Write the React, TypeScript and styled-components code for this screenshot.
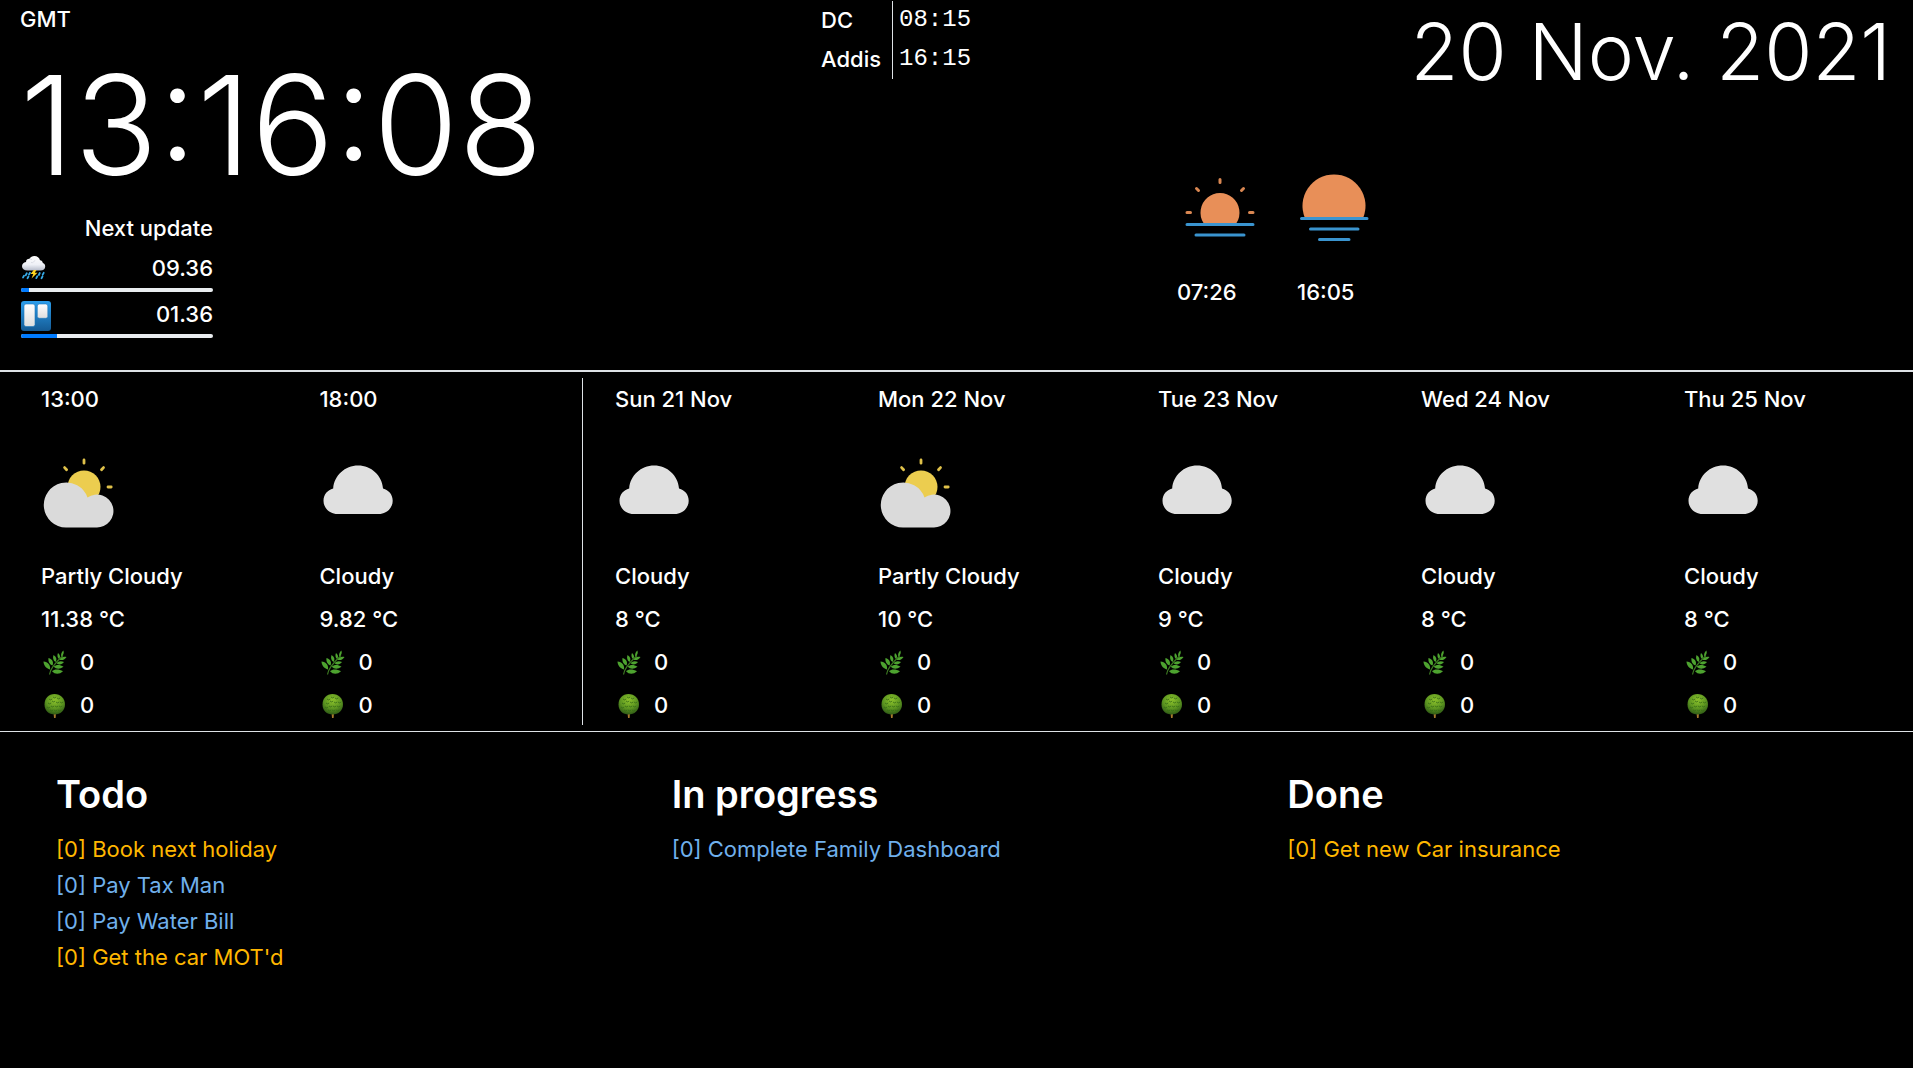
import React from "react";
import styled, { createGlobalStyle } from "styled-components";

const GlobalStyle = createGlobalStyle`
  * { box-sizing: border-box; }
  html { background: #000; }
  body {
    margin: 0;
    background: #000;
    color: #fff;
    font-family: Inter, "Liberation Sans", sans-serif;
    font-size: 22px;
    font-weight: 500;
    line-height: 36px;
  }
  svg { display: block; flex: none; }
`;

const Header = styled.header`
  display: grid;
  grid-template-columns: 821fr 351fr 741fr;
  align-items: start;
  height: 370px;
`;

const ClockColumn = styled.section`
  padding: 1px 0 0 20px;
`;

const Clock = styled.time`
  display: block;
  padding-top: 16px;
  font-size: 138px;
  font-weight: 350;
  line-height: 144px;
  white-space: nowrap;
`;

const Updates = styled.section`
  display: flex;
  flex-direction: column;
  width: 193px;
  margin-top: 13px;
  padding-left: 1px;
`;

const UpdatesTitle = styled.div`
  text-align: right;
  line-height: 36px;
`;

const UpdateRow = styled.div`
  display: flex;
  justify-content: space-between;
  align-items: flex-end;
  height: 42px;
  line-height: 40px;

  svg { margin-bottom: 3px; }
  svg.storm { margin-bottom: 8px; }
`;

const Track = styled.div`
  height: 4px;
  border-radius: 2px;
  background: #e9ecef;
  overflow: hidden;
`;

const Fill = styled.div<{ $percent: number }>`
  width: ${(p) => p.$percent}%;
  height: 100%;
  background: #007bff;
`;

const Zones = styled.table`
  justify-self: start;
  border-collapse: collapse;
  margin-top: 1px;

  th {
    padding: 0 11px 0 0;
    border-right: 1px solid #dee2e6;
    font-weight: 500;
    text-align: left;
    line-height: 39px;
  }

  td {
    padding: 0 0 2px 6px;
    font-family: "Liberation Mono", monospace;
    font-size: 24px;
    font-weight: 400;
    line-height: 37px;
  }
`;

const DateColumn = styled.section`
  display: flex;
  flex-direction: column;
`;

const Today = styled.time`
  padding: 2px 22px 0 0;
  font-size: 78px;
  font-weight: 350;
  line-height: 100px;
  text-align: right;
  white-space: nowrap;
`;

const SunTimes = styled.div`
  display: flex;
  gap: 18px;
  margin-top: 62px;
`;

const SunTime = styled.div`
  display: flex;
  flex-direction: column;
  gap: 14px;
  width: 102px;

  span { padding-left: 5px; }
`;

const Forecast = styled.main`
  display: grid;
  grid-template-columns: 583fr 1330fr;
  padding: 6px 0;
  border-top: 2px solid #dee2e6;
  border-bottom: 1px solid #dee2e6;
`;

const Hours = styled.section`
  display: grid;
  grid-template-columns: 279fr 263fr;
  padding-left: 41px;
  border-right: 1px solid #dee2e6;
`;

const Days = styled.section`
  display: grid;
  grid-template-columns: 263fr 280fr 263fr 263fr 229fr;
  padding-left: 32px;
`;

const Slot = styled.article`
  display: flex;
  flex-direction: column;
  height: 347px;
  line-height: 43px;

  svg.weather { margin: 24px 0 14px; }
`;

const Pollen = styled.div`
  display: flex;
  align-items: center;
  gap: 11px;
  height: 43px;
`;

const Board = styled.section`
  display: grid;
  grid-template-columns: repeat(3, 1fr);
  padding: 36px 33px 0;
`;

const List = styled.section`
  padding-left: 23px;
`;

const ListTitle = styled.h1`
  margin: 0 0 11px;
  font-size: 38px;
  font-weight: 600;
  line-height: 52px;
`;

const Cards = styled.ul`
  margin: 0;
  padding: 0;
  list-style: none;
`;

const Card = styled.li<{ $tone: Tone }>`
  color: ${(p) => (p.$tone === "amber" ? "#ffb700" : "#70b0ec")};
  font-weight: 400;
`;

type Tone = "amber" | "blue";
type Sky = "Partly Cloudy" | "Cloudy";

const StormIcon = () => (
  <svg className="storm" width="26" height="26" viewBox="0 0 26 26" aria-hidden="true">
    <defs>
      <linearGradient id="storm" x1="0" y1="0" x2="0" y2="1">
        <stop offset="0" stopColor="#fff" />
        <stop offset=".6" stopColor="#eef0f6" />
        <stop offset="1" stopColor="#b6bccb" />
      </linearGradient>
    </defs>
    <path d="M6.500 16.500C3 16.500 1 14.700 1 12.200C1 10 2.500 8.500 5 8C5 5.800 6.700 4.700 8.600 4.800C9.500 3 11.300 2 13.300 2C16.300 2 18.500 3.800 19 6.300C20.800 6.600 21.700 7.600 21.800 9C23.400 9.500 24.200 10.800 24.200 12.500C24.200 15 22.300 16.500 19.500 16.500Z" fill="url(#storm)" />
    <path d="M10 8.500C12 9.200 13.300 7.500 14 6.200M8.600 4.800C9.800 4.800 10.600 5.300 11 6" stroke="#d4d7e0" fill="none" strokeWidth=".8" />
    <path d="M12.800 16L9.500 20H12.300L10.500 24.500L16.500 18.800H13.800L15.500 16Z" fill="#ffd51f" />
    <path d="M5.800 19.300L4.700 21.300M9 18.800L8 20.500M3 21.800L2 23.500M7.500 22.500L6.500 24.200M18.800 19L17.800 21M22.700 18.800L21.700 20.700M16.300 22.300L15.300 24.100M21.500 22.500L20.500 24.200" stroke="#36a9e6" strokeWidth="1.800" strokeLinecap="round" />
  </svg>
);

const TrelloIcon = () => (
  <svg width="30" height="30" viewBox="0 0 30 30" aria-hidden="true">
    <defs>
      <linearGradient id="board" x1="0" y1="0" x2="0" y2="1">
        <stop offset="0" stopColor="#2c9eec" />
        <stop offset="1" stopColor="#145a94" />
      </linearGradient>
      <linearGradient id="card" x1="0" y1="0" x2="0" y2="1">
        <stop offset="0" stopColor="#fff" />
        <stop offset="1" stopColor="#dedede" />
      </linearGradient>
    </defs>
    <rect width="30" height="30" rx="3" fill="url(#board)" />
    <rect x="3" y="3" width="11" height="22.500" rx="2" fill="url(#card)" stroke="#1b75bb" strokeWidth=".6" />
    <rect x="16.300" y="3" width="10.500" height="14.300" rx="2" fill="url(#card)" stroke="#1b75bb" strokeWidth=".6" />
  </svg>
);

const SunriseIcon = () => (
  <svg width="96" height="96" viewBox="0 0 96 96" aria-hidden="true">
    <path d="M31.500 59A19.500 19.500 0 1 1 64.500 59Z" fill="#e88f58" />
    <path d="M48 15.500V18.500M24.500 24.500L26.500 26.500M71.500 24.500L69.500 26.500M15 48.500H18.500M77.500 48.500H81" stroke="#d98752" strokeWidth="3" strokeLinecap="round" />
    <path d="M15 60.500H81M24 71H72" stroke="#3a94cf" strokeWidth="3" strokeLinecap="round" />
  </svg>
);

const SunsetIcon = () => (
  <svg width="96" height="96" viewBox="0 0 96 96" aria-hidden="true">
    <path d="M12.700 53.500A31.500 31.500 0 1 1 71.300 53.500Z" fill="#e88f58" />
    <path d="M9.500 54.500H75M18.500 65H66M27.500 75.500H57" stroke="#3a94cf" strokeWidth="3" strokeLinecap="round" />
  </svg>
);

const SkyIcon = ({ sky }: { sky: Sky }) => (
  <svg className="weather" width="96" height="96" viewBox="0 0 96 96" aria-hidden="true">
    {sky === "Partly Cloudy" ? (
      <>
        <circle cx="43" cy="42" r="16.500" fill="#eccd4f" />
        <path d="M43 15V18.200M23.600 22.600L25.600 24.800M62.500 22.600L60.500 24.800M67 42H70.200" stroke="#dfc14a" strokeWidth="2.800" strokeLinecap="round" />
        <path d="M25 82.500A22.500 22.500 0 1 1 46.500 52.500A16.500 16.500 0 1 1 55 82.500Z" fill="#dadada" />
      </>
    ) : (
      <path d="M18.500 69C10.500 69 4.500 63 4.500 55.700C4.500 49.500 8.500 45 14.200 43.500C15 30.500 26 20.500 39.100 20.500C52.200 20.500 63.200 30.500 64 43.500C69.700 45 73.700 49.500 73.700 55.700C73.700 63 67.700 69 59.700 69Z" fill="#e0e0e0" />
    )}
  </svg>
);

const FernIcon = () => (
  <svg width="28" height="28" viewBox="0 0 28 28" aria-hidden="true">
    <path d="M8.500 25.500C9 20 14 14 22 6.500" stroke="#3d7a22" strokeWidth="1.200" fill="none" />
    <g fill="#4da32f">
      <path d="M9 20.500C5 19.500 2.500 16 2.500 12.500C7 13 9.700 16 9 20.500Z" />
      <path d="M11.500 16.500C8.500 15.500 7 12.500 7.500 9C11.500 10.500 12.800 13 11.500 16.500Z" />
      <path d="M14.500 13C12.200 11.500 11.500 9 12.500 6C15.500 8 16.200 10.500 14.500 13Z" />
      <path d="M18 10C16.300 8.500 16 6.300 17 4C19.300 5.800 19.700 8 18 10Z" />
      <path d="M20.300 7.500C19.600 5.500 20.400 3.200 22.500 1.500C23.200 4.200 22.400 6.300 20.300 7.500Z" />
      <path d="M18.500 10.800C20 8.200 22.500 7.200 25.500 8C24 10.500 21.500 11.700 18.500 10.800Z" />
      <path d="M15.500 14.200C17.200 12 20 11.500 23 13C21 15.700 18 16.300 15.500 14.200Z" />
      <path d="M12.700 17.800C15 15.500 19 15.500 22.500 17.700C19 20.200 15.500 20.400 12.700 17.800Z" />
      <path d="M11 22.300C13.500 19.700 18 20 22 22.300C18.500 25.600 14 25.700 11 22.300Z" />
    </g>
  </svg>
);

const LEAVES = [
  [8, 7], [12, 5], [16, 6], [7, 11], [11, 9], [15, 10], [19, 10],
  [6, 15], [10, 14], [14, 14], [18, 14], [9, 18], [13, 18], [17, 18],
];

const TreeIcon = () => (
  <svg width="28" height="28" viewBox="0 0 28 28" aria-hidden="true">
    <defs>
      <radialGradient id="crown" cx=".5" cy=".3" r=".7">
        <stop offset="0" stopColor="#8dc32c" />
        <stop offset=".6" stopColor="#5b9420" />
        <stop offset="1" stopColor="#2f5a16" />
      </radialGradient>
    </defs>
    <path d="M12.500 20H15L14.600 26H13Z" fill="#a77a2d" />
    <path d="M13.500 2C19.500 2 24 6.500 24 12.500C24 18.500 19.500 22.500 13.700 22.500C7.500 22.500 3.500 18.500 3.500 12.500C3.500 6.500 7.500 2 13.500 2Z" fill="url(#crown)" />
    {LEAVES.map(([x, y]) => (
      <path key={`${x}-${y}`} d={`M${x} ${y}q1.500 1.800 3.200 0`} stroke="#346817" strokeWidth=".8" fill="none" />
    ))}
  </svg>
);

const HOURS: { when: string; sky: Sky; temp: string }[] = [
  { when: "13:00", sky: "Partly Cloudy", temp: "11.38" },
  { when: "18:00", sky: "Cloudy", temp: "9.82" },
];

const DAYS: { when: string; sky: Sky; temp: string }[] = [
  { when: "Sun 21 Nov", sky: "Cloudy", temp: "8" },
  { when: "Mon 22 Nov", sky: "Partly Cloudy", temp: "10" },
  { when: "Tue 23 Nov", sky: "Cloudy", temp: "9" },
  { when: "Wed 24 Nov", sky: "Cloudy", temp: "8" },
  { when: "Thu 25 Nov", sky: "Cloudy", temp: "8" },
];

const LISTS: { title: string; cards: { text: string; tone: Tone }[] }[] = [
  {
    title: "Todo",
    cards: [
      { text: "Book next holiday", tone: "amber" },
      { text: "Pay Tax Man", tone: "blue" },
      { text: "Pay Water Bill", tone: "blue" },
      { text: "Get the car MOT'd", tone: "amber" },
    ],
  },
  { title: "In progress", cards: [{ text: "Complete Family Dashboard", tone: "blue" }] },
  { title: "Done", cards: [{ text: "Get new Car insurance", tone: "amber" }] },
];

const ForecastSlot = ({ when, sky, temp }: { when: string; sky: Sky; temp: string }) => (
  <Slot>
    <span>{when}</span>
    <SkyIcon sky={sky} />
    <span>{sky}</span>
    <span>{temp} °C</span>
    <Pollen>
      <FernIcon />
      <span>0</span>
    </Pollen>
    <Pollen>
      <TreeIcon />
      <span>0</span>
    </Pollen>
  </Slot>
);

const Update = ({ icon, time, percent }: { icon: React.ReactNode; time: string; percent: number }) => (
  <>
    <UpdateRow>
      {icon}
      <span>{time}</span>
    </UpdateRow>
    <Track>
      <Fill $percent={percent} />
    </Track>
  </>
);

export default function App() {
  return (
    <>
      <GlobalStyle />
      <Header>
        <ClockColumn>
          <div>GMT</div>
          <Clock>13:16:08</Clock>
          <Updates>
            <UpdatesTitle>Next update</UpdatesTitle>
            <Update icon={<StormIcon />} time="09.36" percent={4} />
            <Update icon={<TrelloIcon />} time="01.36" percent={19} />
          </Updates>
        </ClockColumn>
        <Zones>
          <tbody>
            <tr>
              <th scope="row">DC</th>
              <td>08:15</td>
            </tr>
            <tr>
              <th scope="row">Addis</th>
              <td>16:15</td>
            </tr>
          </tbody>
        </Zones>
        <DateColumn>
          <Today>20 Nov. 2021</Today>
          <SunTimes>
            <SunTime>
              <SunriseIcon />
              <span>07:26</span>
            </SunTime>
            <SunTime>
              <SunsetIcon />
              <span>16:05</span>
            </SunTime>
          </SunTimes>
        </DateColumn>
      </Header>
      <Forecast>
        <Hours>
          {HOURS.map((slot) => (
            <ForecastSlot key={slot.when} {...slot} />
          ))}
        </Hours>
        <Days>
          {DAYS.map((slot) => (
            <ForecastSlot key={slot.when} {...slot} />
          ))}
        </Days>
      </Forecast>
      <Board>
        {LISTS.map((list) => (
          <List key={list.title}>
            <ListTitle>{list.title}</ListTitle>
            <Cards>
              {list.cards.map((card) => (
                <Card key={card.text} $tone={card.tone}>
                  [0] {card.text}
                </Card>
              ))}
            </Cards>
          </List>
        ))}
      </Board>
    </>
  );
}
